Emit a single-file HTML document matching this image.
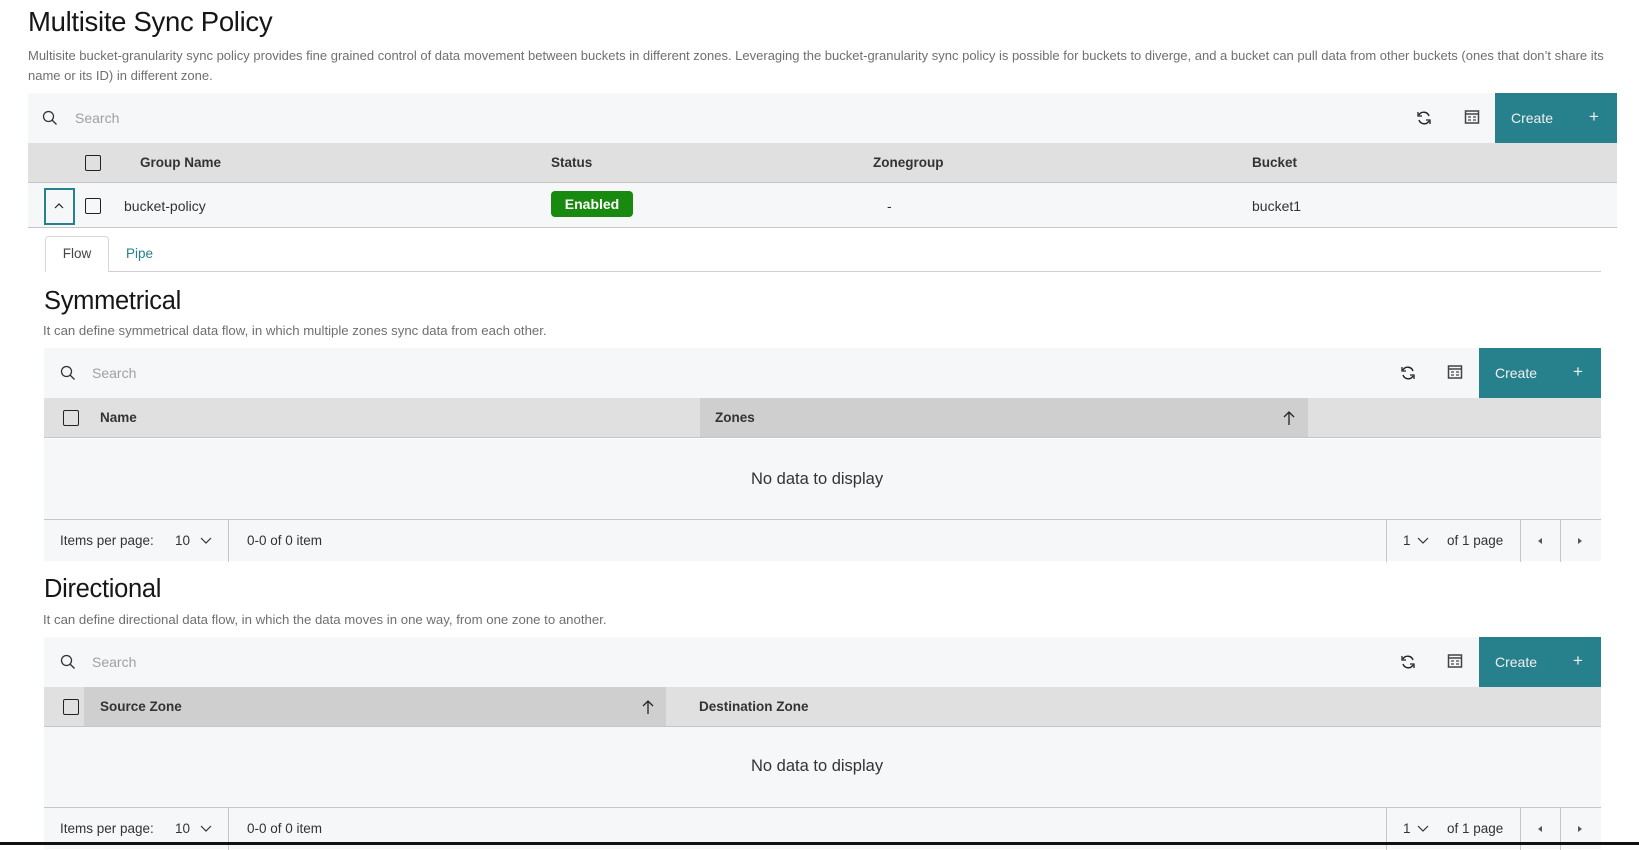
<!DOCTYPE html>
<html><head><meta charset="utf-8"><style>
*{box-sizing:border-box;margin:0;padding:0}
body{width:1639px;height:845px;overflow:hidden;background:#fff;font-family:"Liberation Sans",sans-serif;color:#161616;position:relative}
.abs{position:absolute}
b{white-space:nowrap}
h1{position:absolute;left:28px;top:6px;font-size:27.5px;font-weight:400;letter-spacing:-0.3px}
.desc{position:absolute;font-size:13.2px;color:#6f6f6f;line-height:20px;white-space:nowrap}
h2{position:absolute;font-size:25.5px;font-weight:400;letter-spacing:-0.3px}
.tb{position:absolute;background:#f6f7f9;height:50px}
.tb .s{position:absolute;top:17px;font-size:14px;color:#a0a0a0}
.create{position:absolute;top:0;height:50px;background:#26818c;color:#f0f0f0;font-size:14px}
.create span{position:absolute;top:17px}
.hd{position:absolute;background:#e0e0e0;height:40px;border-bottom:1px solid #c6c6c6}
.hd b{position:absolute;top:12px;font-size:13.5px;font-weight:700;color:#333}
.cb{position:absolute;width:16px;height:16px;border:1.5px solid #222;border-radius:2px}
.pg{position:absolute;height:42px;background:#f6f7f9;border-top:1px solid #c6c6c6;font-size:13.5px;color:#333}
.pg span{position:absolute;top:13px}
.vl{position:absolute;top:0;width:1px;height:42px;background:#c6c6c6}
.nd{position:absolute;font-size:16.5px;color:#333}
</style></head><body>
<h1>Multisite Sync Policy</h1>
<div class="desc" style="left:28px;top:46px;font-size:13px">Multisite bucket-granularity sync policy provides fine grained control of data movement between buckets in different zones. Leveraging the bucket-granularity sync policy is possible for buckets to diverge, and a bucket can pull data from other buckets (ones that don’t share its<br>name or its ID) in different zone.</div>

<!-- top table -->
<div class="tb" style="left:28px;top:93px;width:1589px">
<svg class="abs" style="left:14px;top:17px" width="16" height="16" viewBox="0 0 16 16"><circle cx="6.5" cy="6.5" r="5" fill="none" stroke="#333" stroke-width="1.3"/><path d="M10 10l4.5 4.5" stroke="#333" stroke-width="1.3"/></svg>
<span class="s" style="left:47px">Search</span>
<svg class="abs" style="left:1388px;top:17px" width="16" height="16" viewBox="0 0 16 16"><path d="M13 6A5.5 5.5 0 0 0 3 5M3 10a5.5 5.5 0 0 0 10 1" fill="none" stroke="#222" stroke-width="1.4"/><path d="M2 2v4h4M14 14v-4h-4" fill="none" stroke="#222" stroke-width="1.3"/></svg>
<svg class="abs" style="left:1436px;top:16px" width="16" height="16" viewBox="0 0 16 16"><rect x="1.5" y="2" width="13" height="12" fill="none" stroke="#444" stroke-width="1.5"/><path d="M1.5 5h13" stroke="#444" stroke-width="1.5"/><path d="M4 8h3M9 8h3M4 11h3M9 11h3" stroke="#444" stroke-width="1.3"/></svg>
<div class="create" style="left:1467px;width:122px"><span style="left:16px">Create</span><span style="left:94px;top:14px;font-size:17px">+</span></div>
</div>
<div class="hd" style="left:28px;top:143px;width:1589px;height:40px">
<div class="cb" style="left:57px;top:12px"></div>
<b style="left:112px">Group Name</b><b style="left:523px">Status</b><b style="left:845px">Zonegroup</b><b style="left:1224px">Bucket</b>
</div>
<div class="abs" style="left:28px;top:183px;width:1589px;height:45px;background:#f6f7f9;border-bottom:1px solid #c6c6c6"></div>
<div class="abs" style="left:44px;top:188px;width:31px;height:37px;border:2px solid #26818c;background:#f6f7f9"></div>
<svg class="abs" style="left:54px;top:202px" width="10" height="8" viewBox="0 0 10 8"><path d="M1 6l4-4 4 4" fill="none" stroke="#222" stroke-width="1.2"/></svg>
<div class="cb" style="left:85px;top:198px"></div>
<span class="abs" style="left:124px;top:198px;font-size:14px;color:#333">bucket-policy</span>
<div class="abs" style="left:551px;top:191px;width:82px;height:26px;background:#198a10;border-radius:4px;color:#fff;font-weight:700;font-size:14px;text-align:center;line-height:26px">Enabled</div>
<span class="abs" style="left:887px;top:198px;font-size:14px;color:#333">-</span>
<span class="abs" style="left:1252px;top:198px;font-size:14px;color:#333">bucket1</span>

<!-- tabs -->
<div class="abs" style="left:45px;top:271px;width:1556px;height:1px;background:#d0d0d0"></div>
<div class="abs" style="left:45px;top:236px;width:64px;height:36px;border:1px solid #d8d8d8;border-bottom:none;border-radius:4px 4px 0 0;background:#fff;font-size:13.5px;color:#444;text-align:center;line-height:34px">Flow</div>
<span class="abs" style="left:126px;top:246px;font-size:13.5px;color:#26818c">Pipe</span>

<!-- Symmetrical -->
<h2 style="left:44px;top:287px">Symmetrical</h2>
<div class="desc" style="left:43px;top:321px">It can define symmetrical data flow, in which multiple zones sync data from each other.</div>
<div class="tb" style="left:44px;top:348px;width:1557px">
<svg class="abs" style="left:16px;top:17px" width="16" height="16" viewBox="0 0 16 16"><circle cx="6.5" cy="6.5" r="5" fill="none" stroke="#333" stroke-width="1.3"/><path d="M10 10l4.5 4.5" stroke="#333" stroke-width="1.3"/></svg>
<span class="s" style="left:48px">Search</span>
<svg class="abs" style="left:1356px;top:17px" width="16" height="16" viewBox="0 0 16 16"><path d="M13 6A5.5 5.5 0 0 0 3 5M3 10a5.5 5.5 0 0 0 10 1" fill="none" stroke="#222" stroke-width="1.4"/><path d="M2 2v4h4M14 14v-4h-4" fill="none" stroke="#222" stroke-width="1.3"/></svg>
<svg class="abs" style="left:1403px;top:16px" width="16" height="16" viewBox="0 0 16 16"><rect x="1.5" y="2" width="13" height="12" fill="none" stroke="#444" stroke-width="1.5"/><path d="M1.5 5h13" stroke="#444" stroke-width="1.5"/><path d="M4 8h3M9 8h3M4 11h3M9 11h3" stroke="#444" stroke-width="1.3"/></svg>
<div class="create" style="left:1435px;width:122px"><span style="left:16px">Create</span><span style="left:94px;top:14px;font-size:17px">+</span></div>
</div>
<div class="hd" style="left:44px;top:398px;width:1557px">
<div class="abs" style="left:656px;top:0;width:608px;height:39px;background:#cfcfcf"></div>
<div class="cb" style="left:19px;top:12px"></div>
<b style="left:56px">Name</b><b style="left:671px">Zones</b>
<svg class="abs" style="left:1238px;top:12px" width="14" height="16" viewBox="0 0 14 16"><path d="M7 15V2M2 7l5-5 5 5" fill="none" stroke="#222" stroke-width="1.3"/></svg>
</div>
<div class="abs" style="left:44px;top:439px;width:1557px;height:80px;background:#f6f7f9"></div>
<div class="nd" style="left:751px;top:470px">No data to display</div>
<div class="pg" style="left:44px;top:519px;width:1557px">
<span style="left:16px">Items per page:</span><span style="left:131px">10</span>
<svg class="abs" style="left:156px;top:17px" width="12" height="8" viewBox="0 0 12 8"><path d="M1 1l5 5 5-5" fill="none" stroke="#333" stroke-width="1.2"/></svg>
<div class="vl" style="left:184px"></div><span style="left:203px">0-0 of 0 item</span>
<div class="vl" style="left:1342px"></div><span style="left:1359px">1</span>
<svg class="abs" style="left:1373px;top:17px" width="12" height="8" viewBox="0 0 12 8"><path d="M1 1l5 5 5-5" fill="none" stroke="#333" stroke-width="1.2"/></svg>
<span style="left:1403px">of 1 page</span>
<div class="vl" style="left:1476px"></div><div class="vl" style="left:1516px"></div>
<svg class="abs" style="left:1492px;top:17px" width="8" height="8"><path d="M6 1v6L2 4z" fill="#555"/></svg>
<svg class="abs" style="left:1532px;top:17px" width="8" height="8"><path d="M2 1v6l4-3z" fill="#555"/></svg>
</div>

<!-- Directional -->
<h2 style="left:44px;top:575px">Directional</h2>
<div class="desc" style="left:43px;top:610px">It can define directional data flow, in which the data moves in one way, from one zone to another.</div>
<div class="tb" style="left:44px;top:637px;width:1557px">
<svg class="abs" style="left:16px;top:17px" width="16" height="16" viewBox="0 0 16 16"><circle cx="6.5" cy="6.5" r="5" fill="none" stroke="#333" stroke-width="1.3"/><path d="M10 10l4.5 4.5" stroke="#333" stroke-width="1.3"/></svg>
<span class="s" style="left:48px">Search</span>
<svg class="abs" style="left:1356px;top:17px" width="16" height="16" viewBox="0 0 16 16"><path d="M13 6A5.5 5.5 0 0 0 3 5M3 10a5.5 5.5 0 0 0 10 1" fill="none" stroke="#222" stroke-width="1.4"/><path d="M2 2v4h4M14 14v-4h-4" fill="none" stroke="#222" stroke-width="1.3"/></svg>
<svg class="abs" style="left:1403px;top:16px" width="16" height="16" viewBox="0 0 16 16"><rect x="1.5" y="2" width="13" height="12" fill="none" stroke="#444" stroke-width="1.5"/><path d="M1.5 5h13" stroke="#444" stroke-width="1.5"/><path d="M4 8h3M9 8h3M4 11h3M9 11h3" stroke="#444" stroke-width="1.3"/></svg>
<div class="create" style="left:1435px;width:122px"><span style="left:16px">Create</span><span style="left:94px;top:14px;font-size:17px">+</span></div>
</div>
<div class="hd" style="left:44px;top:687px;width:1557px">
<div class="abs" style="left:40px;top:0;width:582px;height:39px;background:#cfcfcf"></div>
<div class="cb" style="left:19px;top:12px"></div>
<b style="left:56px">Source Zone</b><b style="left:655px">Destination Zone</b>
<svg class="abs" style="left:597px;top:12px" width="14" height="16" viewBox="0 0 14 16"><path d="M7 15V2M2 7l5-5 5 5" fill="none" stroke="#222" stroke-width="1.3"/></svg>
</div>
<div class="abs" style="left:44px;top:727px;width:1557px;height:80px;background:#f6f7f9"></div>
<div class="nd" style="left:751px;top:757px">No data to display</div>
<div class="pg" style="left:44px;top:807px;width:1557px">
<span style="left:16px">Items per page:</span><span style="left:131px">10</span>
<svg class="abs" style="left:156px;top:17px" width="12" height="8" viewBox="0 0 12 8"><path d="M1 1l5 5 5-5" fill="none" stroke="#333" stroke-width="1.2"/></svg>
<div class="vl" style="left:184px"></div><span style="left:203px">0-0 of 0 item</span>
<div class="vl" style="left:1342px"></div><span style="left:1359px">1</span>
<svg class="abs" style="left:1373px;top:17px" width="12" height="8" viewBox="0 0 12 8"><path d="M1 1l5 5 5-5" fill="none" stroke="#333" stroke-width="1.2"/></svg>
<span style="left:1403px">of 1 page</span>
<div class="vl" style="left:1476px"></div><div class="vl" style="left:1516px"></div>
<svg class="abs" style="left:1492px;top:17px" width="8" height="8"><path d="M6 1v6L2 4z" fill="#555"/></svg>
<svg class="abs" style="left:1532px;top:17px" width="8" height="8"><path d="M2 1v6l4-3z" fill="#555"/></svg>
</div>
<div class="abs" style="left:0;top:842px;width:1639px;height:3px;background:#111"></div>
</body></html>
